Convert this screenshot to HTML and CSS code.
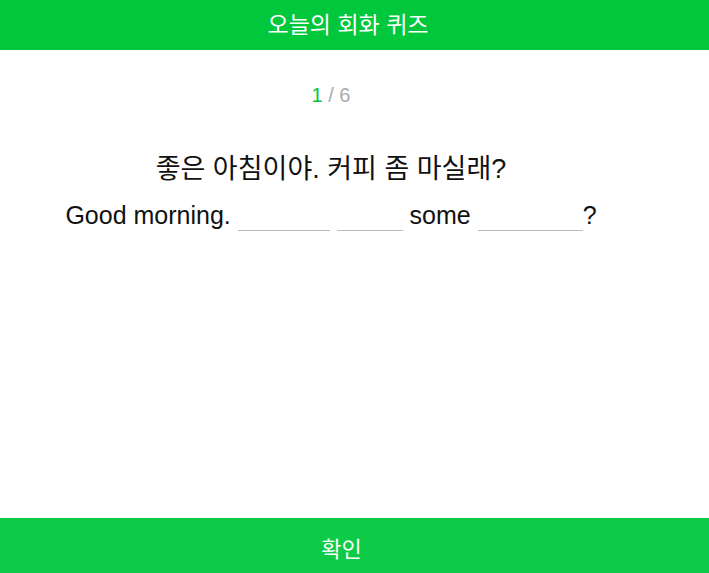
FILE: index.html
```html
<!DOCTYPE html>
<html lang="ko">
<head>
<meta charset="utf-8">
<link rel="stylesheet" href="styles.css">
</head>
<body>
<div class="app">
  <header class="topbar">오늘의 회화 퀴즈</header>
  <main class="content">
    <div class="progress"><span class="cur">1</span> / 6</div>
    <div class="ko">좋은 아침이야. 커피 좀 마실래?</div>
    <div class="en">Good morning. <span class="blank b1"></span> <span class="blank b2"></span> some <span class="blank b3"></span>?</div>
  </main>
  <footer class="confirm">확인</footer>
</div>
</body>
</html>
```
FILE: styles.css
```css
html, body {
  margin: 0;
  padding: 0;
  height: 100%;
  background: #fff;
}
body {
  font-family: "Liberation Sans", "Noto Sans CJK KR", sans-serif;
}
.app {
  display: flex;
  flex-direction: column;
  height: 573px;
}
.topbar {
  height: 50px;
  box-sizing: border-box;
  padding: 0 13px 5px 0;
  background: #00c73c;
  color: #fff;
  font-size: 23px;
  display: flex;
  align-items: center;
  justify-content: center;
}
.content {
  flex: 1;
  padding-right: 47px;
  text-align: center;
}
.progress {
  margin-top: 33px;
  font-size: 20px;
  color: #aaa;
  line-height: 24px;
}
.progress .cur {
  color: #00c73c;
}
.ko {
  margin-top: 47px;
  font-size: 27px;
  line-height: 30px;
  color: #111;
}
.en {
  margin-top: 16px;
  font-size: 25px;
  line-height: 30px;
  color: #111;
}
.blank {
  display: inline-block;
  height: 24px;
  border-bottom: 1px solid #bbb;
  vertical-align: -7px;
}
.b1 { width: 92px; }
.b2 { width: 66px; }
.b3 { width: 105px; }
.confirm {
  height: 55px;
  box-sizing: border-box;
  padding: 2px 26px 0 0;
  background: #0ecb47;
  color: #fff;
  font-size: 22px;
  display: flex;
  align-items: center;
  justify-content: center;
}
```
